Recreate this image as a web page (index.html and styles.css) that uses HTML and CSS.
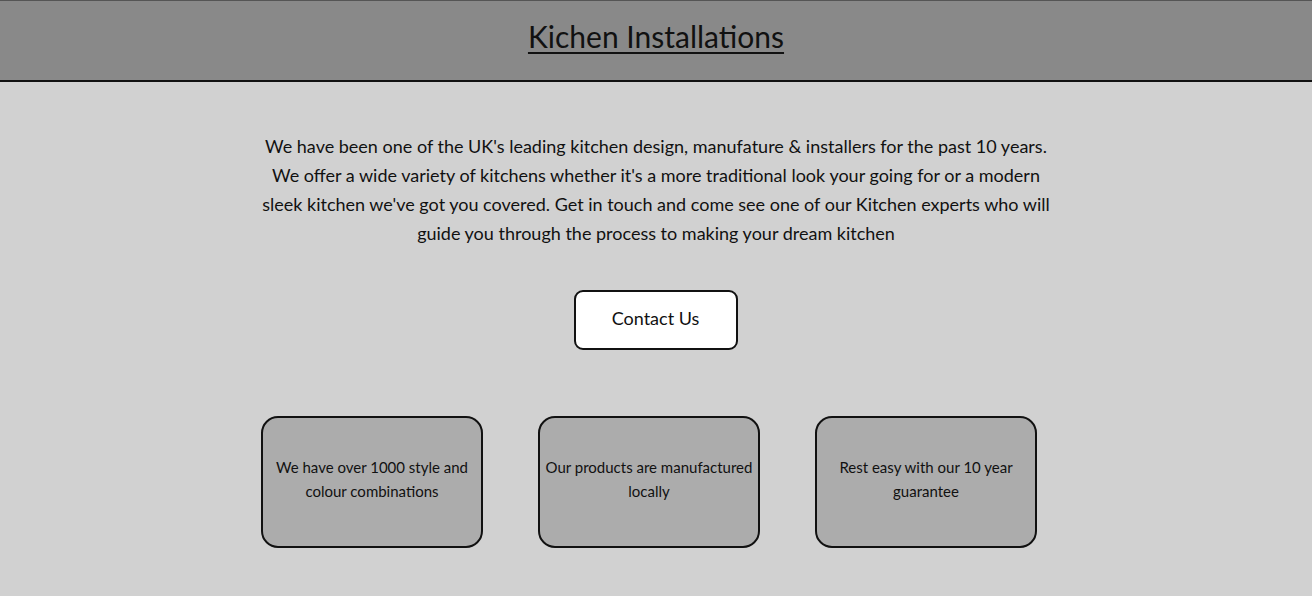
FILE: index.html
```html
<!DOCTYPE html>
<html lang="en">
<head>
<meta charset="utf-8">
<title>Kichen Installations</title>
<link rel="stylesheet" href="styles.css">
</head>
<body>
<header class="site-header">
  <h1 class="title">Kichen Installations</h1>
</header>
<main class="content">
  <p class="intro">We have been one of the UK's leading kitchen design, manufature &amp; installers for the past 10 years. We offer a wide variety of kitchens whether it's a more traditional look your going for or a modern sleek kitchen we've got you covered. Get in touch and come see one of our Kitchen experts who will guide you through the process to making your dream kitchen</p>
  <div class="cta">
    <a class="btn" href="#">Contact Us</a>
  </div>
  <div class="cards">
    <div class="card">We have over 1000 style and colour combinations</div>
    <div class="card">Our products are manufactured locally</div>
    <div class="card">Rest easy with our 10 year guarantee</div>
  </div>
</main>
</body>
</html>
```
FILE: styles.css
```css
* { box-sizing: border-box; }
html, body { margin: 0; padding: 0; }
body {
  background: #d1d1d1;
  font-family: Lato, "Open Sans", sans-serif;
  color: #111;
}
.site-header {
  background: #898989;
  border-top: 1px solid #555;
  border-bottom: 2px solid #111;
  height: 82px;
  display: flex;
  justify-content: center;
  align-items: flex-start;
}
.title {
  margin: 15px 0 0;
  font-size: 30px;
  font-weight: 400;
  text-decoration: underline;
  text-decoration-thickness: 2px;
  text-underline-offset: 4px;
  line-height: 40px;
}
.content {
  display: flex;
  flex-direction: column;
  align-items: center;
}
.intro {
  width: 800px;
  margin: 50px 0 0;
  text-align: center;
  font-size: 18px;
  line-height: 29px;
}
.cta {
  margin-top: 42px;
  margin-right: 1px;
}
.btn {
  display: flex;
  align-items: center;
  justify-content: center;
  width: 164px;
  height: 60px;
  background: #fff;
  border: 2px solid #111;
  border-radius: 9px;
  color: #111;
  text-decoration: none;
  font-size: 18px;
  padding-bottom: 5px;
}
.cards {
  display: flex;
  gap: 55px;
  margin-top: 66px;
  margin-right: 14px;
}
.card {
  width: 222px;
  height: 132px;
  background: #acacac;
  border: 2px solid #111;
  border-radius: 17px;
  display: flex;
  align-items: center;
  justify-content: center;
  text-align: center;
  font-size: 15px;
  line-height: 24px;
  padding: 0 4px 6px;
}
```
